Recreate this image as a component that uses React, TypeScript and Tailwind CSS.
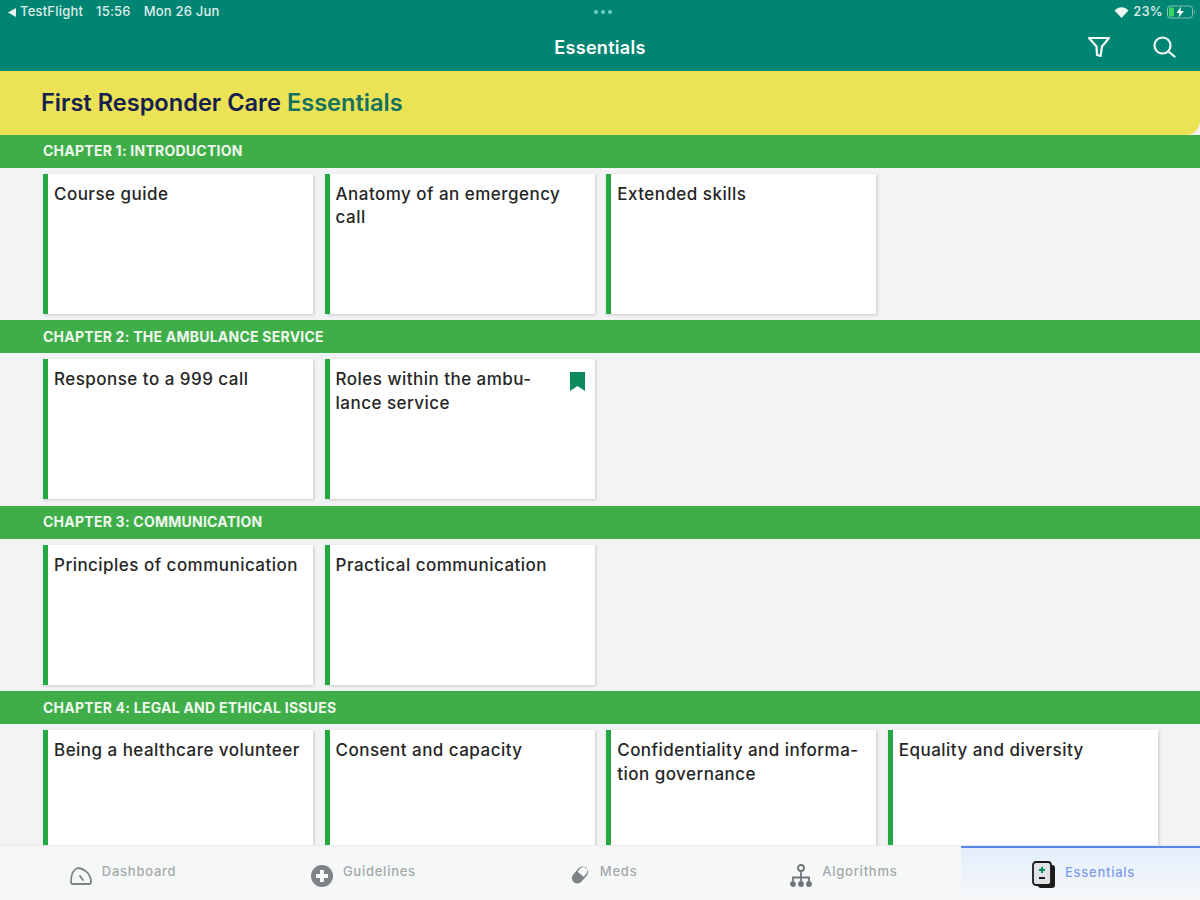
const chapters = [
  {
    title: "CHAPTER 1: INTRODUCTION",
    items: [{ text: "Course guide" }, { text: "Anatomy of an emergency\ncall" }, { text: "Extended skills" }],
  },
  {
    title: "CHAPTER 2: THE AMBULANCE SERVICE",
    items: [{ text: "Response to a 999 call" }, { text: "Roles within the ambu-\nlance service", saved: true }],
  },
  {
    title: "CHAPTER 3: COMMUNICATION",
    items: [{ text: "Principles of communication" }, { text: "Practical communication" }],
  },
  {
    title: "CHAPTER 4: LEGAL AND ETHICAL ISSUES",
    items: [
      { text: "Being a healthcare volunteer" },
      { text: "Consent and capacity" },
      { text: "Confidentiality and informa-\ntion governance" },
      { text: "Equality and diversity" },
    ],
  },
]

function Card({ text, saved }: { text: string; saved?: boolean }) {
  return (
    <div className="relative h-[140px] w-[270px] shrink-0 border-l-[5px] border-[#25a842] bg-white pl-[6px] pr-2 pt-[9px] text-[17px] leading-[23.5px] tracking-[0.47px] font-medium text-[#262626] shadow-[1px_1px_3px_rgba(0,0,0,0.18)] whitespace-pre-line">
      {text}
      {saved && (
        <svg className="absolute right-[10px] top-[13px]" width="15" height="19" viewBox="0 0 15 19">
          <path d="M0 0h15v19l-7.500-5L0 19z" fill="#0b8a5c" />
        </svg>
      )}
    </div>
  )
}

function Tab({ label, icon, active }: { label: string; icon: React.ReactNode; active?: boolean }) {
  return (
    <div
      className={
        active
          ? "flex h-full w-[239px] items-center justify-center gap-[9px] border-t-2 border-[#5a86e6] bg-gradient-to-b from-[#e3eefb] to-[#f6f8f9] pl-[6px] text-[#7d9df0]"
          : "flex h-full flex-1 items-center justify-center gap-[10px] pl-[6px] text-[#a3a8ab]"
      }
    >
      {icon}
      <span className="relative -top-[1px] text-[13px] tracking-[0.75px] font-medium">{label}</span>
    </div>
  )
}

export default function App() {
  return (
    <div className="flex h-[900px] w-[1200px] flex-col overflow-hidden bg-[#f2f3f5] font-['Inter',sans-serif]">
      <header className="h-[71px] shrink-0 bg-[#008573] text-white">
        <div className="flex h-[24px] items-center justify-between pl-[8px] pr-[3px] text-[13px] font-medium tracking-[0.2px] text-[#dfeeea]">
          <div className="flex w-[400px] items-center">
            <svg width="8" height="9" viewBox="0 0 8 9" className="mr-[4px]">
              <path d="M8 0v9L0 4.500z" fill="#e8f2ef" />
            </svg>
            <span>TestFlight</span>
            <span className="ml-[13px]">15:56</span>
            <span className="ml-[13px]">Mon 26 Jun</span>
          </div>
          <div className="flex gap-[3px]">
            <span className="h-[4px] w-[4px] rounded-full bg-[#6fd0c0]" />
            <span className="h-[4px] w-[4px] rounded-full bg-[#6fd0c0]" />
            <span className="h-[4px] w-[4px] rounded-full bg-[#6fd0c0]" />
          </div>
          <div className="flex w-[400px] items-center justify-end gap-[4px]">
            <svg width="15" height="12" viewBox="0 0 15 12">
              <path d="M7.500 12 0.500 4.500C4.500 0 10.500 0 14.500 4.500z" fill="#eef6f4" />
            </svg>
            <span>23%</span>
            <svg width="30" height="14" viewBox="0 0 30 14">
              <rect x="0.500" y="1" width="25" height="12" rx="3" fill="none" stroke="#8cbcb2" />
              <rect x="2" y="2.500" width="5" height="9" rx="1" fill="#3fd65f" />
              <path d="M14 1.500 9.500 8h3l-1 4.500L17 6h-3.500z" fill="#fff" />
              <path d="M27 5v4c1.300-.5 1.300-3.500 0-4z" fill="#8cbcb2" />
            </svg>
          </div>
        </div>
        <div className="relative flex h-[47px] items-center justify-center">
          <span className="text-[18px] tracking-[0.3px] font-semibold">Essentials</span>
          <div className="absolute right-[24px] top-[11px] flex items-center gap-[41px]">
            <svg width="24" height="24" viewBox="0 0 24 24" fill="none" stroke="#f4f8f7" strokeWidth="2.200" strokeLinejoin="round">
              <path d="M2 3h20l-7 8.500-1.500 9.500-3.500-1-.500-8.500z" />
            </svg>
            <svg width="24" height="24" viewBox="0 0 24 24" fill="none" stroke="#f4f8f7" strokeWidth="2.200" strokeLinecap="round">
              <circle cx="10.500" cy="10.500" r="8" />
              <path d="m16.500 16.500 6 5" />
            </svg>
          </div>
        </div>
      </header>

      <main className="min-h-0 flex-1 overflow-hidden">
        <div className="flex h-[63.500px] items-center rounded-br-[14px] bg-[#ebe355] pb-[1px] pl-[41px] text-[23.600px] font-semibold">
          <span className="text-[#16204f]">First Responder Care</span>
          <span className="ml-[6px] text-[#14705f]">Essentials</span>
        </div>
        {chapters.map((chapter) => (
          <section key={chapter.title} className="h-[185.500px]">
            <div className="flex h-[33px] items-center bg-[#3fae49] pb-[1px] pl-[43px] text-[14px] font-bold tracking-[0.24px] text-[#f0f8ee]">
              {chapter.title}
            </div>
            <div className="flex gap-[11.600px] pl-[43px] pt-[6px]">
              {chapter.items.map((item) => (
                <Card key={item.text} text={item.text} saved={item.saved} />
              ))}
            </div>
          </section>
        ))}
      </main>

      <nav className="flex h-[55px] shrink-0 items-center border-t border-[#e8eaeb] bg-[#f6f8f8]">
        <Tab
          label="Dashboard"
          icon={
            <svg width="22" height="20" viewBox="0 0 22 20" fill="none" stroke="#7c8286" strokeWidth="1.800" className="mt-[6px]">
              <path d="M3 18h16a2 2 0 0 0 2-2C21 9 16 3 8 2 4 3 1 8 1 16a2 2 0 0 0 2 2z" />
              <path d="m10 10 3 4" strokeLinecap="round" />
            </svg>
          }
        />
        <Tab
          label="Guidelines"
          icon={
            <svg width="22" height="22" viewBox="0 0 22 22" className="mt-[5px]">
              <circle cx="11" cy="11" r="11" fill="#7c8286" />
              <path d="M9 5h4v4h4v4h-4v4H9v-4H5V9h4z" fill="#f6f8f8" />
            </svg>
          }
        />
        <Tab
          label="Meds"
          icon={
            <svg width="20" height="20" viewBox="0 0 20 20" className="mt-[3px]">
              <g transform="rotate(-50 10 10)">
                <rect x="0.500" y="4.500" width="19" height="11" rx="5.500" fill="#7c8286" />
                <path d="M11 6h4a4 4 0 0 1 0 8h-4z" fill="#f6f8f8" />
              </g>
            </svg>
          }
        />
        <Tab
          label="Algorithms"
          icon={
            <svg width="22" height="24" viewBox="0 0 22 24" fill="none" stroke="#6f7579" strokeWidth="1.800" className="mt-[5px]">
              <circle cx="11" cy="4" r="3" />
              <path d="M11 7v10M3 17v-3.500h16V17" />
              <circle cx="3" cy="20" r="2" fill="#6f7579" />
              <circle cx="11" cy="20" r="2" fill="#6f7579" />
              <circle cx="19" cy="20" r="2" fill="#6f7579" />
            </svg>
          }
        />
        <Tab
          active
          label="Essentials"
          icon={
            <svg width="24" height="28" viewBox="0 0 24 28" fill="none" className="mt-[1px]">
              <rect x="6" y="4" width="17" height="23" rx="3" fill="#1b1b1b" />
              <rect x="1" y="1" width="18" height="23" rx="3" fill="#dfe3e6" stroke="#1b1b1b" strokeWidth="1.800" />
              <path d="M9 6h2v2h2v2h-2v2H9v-2H7V8h2z" fill="#0b8a5c" />
              <path d="M7 17h6" stroke="#1b1b1b" strokeWidth="2" />
            </svg>
          }
        />
      </nav>
    </div>
  )
}
